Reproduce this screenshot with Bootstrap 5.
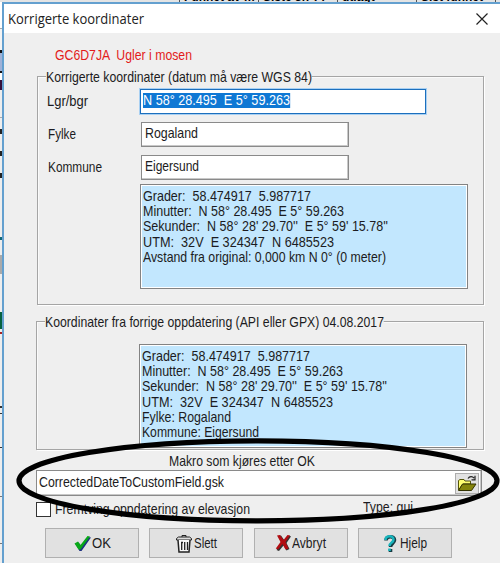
<!DOCTYPE html>
<html lang="no">
<head>
<meta charset="utf-8">
<meta name="viewport" content="width=device-width, initial-scale=1">
<title>Korrigerte koordinater</title>
<link rel="stylesheet" href="https://cdn.jsdelivr.net/npm/bootstrap@5.3.0/dist/css/bootstrap.min.css">
<style>
body{width:500px;height:563px;overflow:hidden;background:#f4f4f4;font-family:"Liberation Sans",Arial,sans-serif;font-size:14.5px;line-height:15.2px;color:#1c1c22}
.screen{width:500px;height:563px}
.grid-head{height:2px;font-size:12px;line-height:12px;background:#e4e4e4;color:#000;padding-left:179px}
.grid-head span{flex:0 0 79px;height:2px;border-left:1px solid #555;padding-left:4px;overflow:hidden;white-space:nowrap}
.grid-head b{display:block;font-weight:700;margin-top:-9px}
.grid-side{width:2px;background:linear-gradient(#fff 0 26px,#aaa 26px 27px,#f4f4f4 27px 48px,#111 48px 51px,#9fb2d8 51px 69px,#111 69px 71px,#fff 71px 78px,#35103a 78px 88px,#eee 88px 115px,#aaa 115px 116px,#eee 116px 127px,#222 127px 132px,#eee 132px 149px,#222 149px 154px,#eee 154px 171px,#222 171px 176px,#eee 176px 235px,#167 235px 238px,#eee 238px 253px,#aaa 253px 272px,#eee 272px 310px,#06623f 310px 327px,#eee 327px 330px,#a22 330px 332px,#eee 332px 404px,#333 404px 406px,#eee 406px 411px,#333 411px 412px,#eee 412px 445px,#333 445px 446px,#eee 446px 494px,#777 494px 495px,#eee 495px 541px,#777 541px 542px,#eee 542px)}
.dlg{width:498px;height:561px;background:#efefef;border-left:2px solid #64a0cf;border-top:2px solid #64a0cf}
.titlebar{height:29px;background:#fff;padding:0 12px 0 4px;font-family:"Open Sans","Noto Sans",sans-serif;font-size:14px;color:#222}
.fit{display:inline-block;white-space:pre;transform-origin:0 50%}
.cache{color:#e31b1b;height:43px;padding:15px 0 0 51px}
.grp{border:1px solid #a5a5a5;box-shadow:1px 1px 0 #fff,inset 1px 1px 0 #fafafa}
.g1{margin-left:33px;width:447px;height:229px}
.g2{margin:16px 0 0 32px;width:448px;height:129px}
.cap{display:block;width:max-content;height:15px;margin:-7px 0 0 8px}
.cap .fit{background:#efefef}
.lab{width:103px;padding-left:10px}
.lab.first{width:102px;padding-left:9px}
.inp{border:1px solid #8a8a8a;background:#fff;box-shadow:inset -1px -1px 0 #c8c8c8}
.inp.big{width:286px;height:25px;border:1px solid #1c6fbd;outline:1px solid #a9d0f2;padding:3px 2px;box-shadow:none}
.inp.sm{width:208px;height:25px;padding:3px 3px}
.sel{background:#0f78d4;color:#fff}
.info{width:328px;border:1px solid #838383;background:#c2e7fe;box-shadow:inset 0 0 0 1px #fff;padding:4px 2px;overflow:hidden}
.info div{height:15.2px}
.i1{height:105px;margin:4px 0 0 102px}
.i2{height:104px;margin:14px 0 0 102px}
.macro-cap{height:20px;padding:4px 0 0 165px}
.macro{width:446px;height:26px;margin-left:32px;padding:0 2px;border:1px solid #8a8a8a;background:#fff;box-shadow:inset -1px -1px 0 #c8c8c8}
.fold{width:24px;height:21px;background:#e2e2e2;border:1px solid #adadad}
.opts{height:32px}
.chk{width:15px;height:15px;border:1px solid #333;background:#fff;margin:6px 0 0 32px}
.opt-lab{width:312px;padding:6px 0 0 4px}
.btns{padding-left:41px;gap:10.3px}
.wbtn{width:94px;height:30px;border:1px solid #b0b0b0;border-radius:0;background:#e1e1e1;padding:0;font-size:14.5px;line-height:15px;color:#1c1c22}
.ring{left:0;top:0;pointer-events:none}
</style>
<script src="https://cdn.jsdelivr.net/npm/bootstrap@5.3.0/dist/js/bootstrap.bundle.min.js"></script>
</head>
<body>
<div class="screen position-relative overflow-hidden">
  <div class="grid-head d-flex"><span><b>Funnet av m</b></span><span><b>Siste 3n ??</b></span><span><b>utlagt</b></span><span><b>Sist funnet</b></span><span></span></div>
  <div class="d-flex">
    <div class="grid-side"></div>
    <main class="dlg">
      <header class="titlebar d-flex align-items-center justify-content-between">
        <span class="fit" data-w="136">Korrigerte koordinater</span>
        <svg width="12" height="12" viewBox="0 0 12 12" stroke="#222" stroke-width="1.2"><path d="M.5.5l11 11M11.5.5l-11 11"/></svg>
      </header>
      <div class="cache"><span class="fit" data-w="137">GC6D7JA  Ugler i mosen</span></div>
      <section class="grp g1">
        <div class="cap"><span class="fit" data-w="266">Korrigerte koordinater (datum må være WGS 84)</span></div>
        <div class="d-flex align-items-center mt-1"><div class="lab first"><span class="fit" data-w="41">Lgr/bgr</span></div><div class="inp big"><span class="fit sel" data-w="147">N 58° 28.495  E 5° 59.263</span></div></div>
        <div class="d-flex align-items-center mt-2"><div class="lab"><span class="fit" data-w="28">Fylke</span></div><div class="inp sm"><span class="fit" data-w="53">Rogaland</span></div></div>
        <div class="d-flex align-items-center mt-2"><div class="lab"><span class="fit" data-w="54">Kommune</span></div><div class="inp sm"><span class="fit" data-w="54">Eigersund</span></div></div>
        <div class="info i1">
          <div><span class="fit" data-w="168">Grader:  58.474917  5.987717</span></div>
          <div><span class="fit" data-w="201">Minutter:  N 58° 28.495  E 5° 59.263</span></div>
          <div><span class="fit" data-w="245">Sekunder:  N 58° 28' 29.70''  E 5° 59' 15.78''</span></div>
          <div><span class="fit" data-w="191">UTM:  32V  E 324347  N 6485523</span></div>
          <div><span class="fit" data-w="243">Avstand fra original: 0,000 km N 0° (0 meter)</span></div>
        </div>
      </section>
      <section class="grp g2">
        <div class="cap"><span class="fit" data-w="339">Koordinater fra forrige oppdatering (API eller GPX) 04.08.2017</span></div>
        <div class="info i2">
          <div><span class="fit" data-w="168">Grader:  58.474917  5.987717</span></div>
          <div><span class="fit" data-w="201">Minutter:  N 58° 28.495  E 5° 59.263</span></div>
          <div><span class="fit" data-w="245">Sekunder:  N 58° 28' 29.70''  E 5° 59' 15.78''</span></div>
          <div><span class="fit" data-w="191">UTM:  32V  E 324347  N 6485523</span></div>
          <div><span class="fit" data-w="89">Fylke: Rogaland</span></div>
          <div><span class="fit" data-w="117">Kommune: Eigersund</span></div>
        </div>
      </section>
      <div class="macro-cap"><span class="fit" data-w="146">Makro som kjøres etter OK</span></div>
      <div class="macro d-flex align-items-center justify-content-between">
        <span class="fit" data-w="185">CorrectedDateToCustomField.gsk</span>
        <div class="fold d-flex align-items-center justify-content-center">
          <svg width="20" height="17" viewBox="0 0 20 17"><path d="M1.5 15V5.5l1.5-1h4l1 1.5h5.5V9H6z" fill="#ffff72" stroke="#55550a"/><path d="M1.5 15.5L5.5 9H19l-4.500 6.500z" fill="#85850c" stroke="#333300"/><path d="M11 3.500c1.500-2.500 4.500-2.500 6-.300M18 .8v4h-3.500" fill="none" stroke="#222" stroke-width="1.200"/></svg>
        </div>
      </div>
      <div class="opts d-flex">
        <div class="chk"></div>
        <div class="opt-lab"><span class="fit" data-w="195">Fremtving oppdatering av elevasjon</span></div>
        <div class="pt-1"><span class="fit" data-w="50">Type: gui</span></div>
      </div>
      <div class="btns d-flex">
        <button class="btn wbtn d-flex align-items-center justify-content-center"><svg width="18" height="17" viewBox="0 0 18 17"><path d="M1.500 9l3-1.500 2.500 3L14 2l3 .5L7.500 16H5.500z" fill="#1c2f80"/><path d="M.5 8.500l3.500-2 2.500 3.500L13.500 1l2.500.5L6.500 14.500h-2z" fill="#08a818"/></svg><span class="fit" data-w="19">OK</span></button>
        <button class="btn wbtn d-flex align-items-center justify-content-center"><svg width="19" height="19" viewBox="0 0 19 19" fill="none" stroke="#222"><path d="M7 3V1.500h4V3M1.500 6V4.500l2-1.500h11l2 1.500V6z" fill="#ddd"/><path d="M3 6l1 12h10l1-12" fill="#f8f8f8" stroke-width="1.500"/><path d="M6 8.500h2M6.700 8v8M9.700 8v8M12.500 8v8" stroke-width="1.300"/></svg><span class="fit" data-w="23">Slett</span></button>
        <button class="btn wbtn d-flex align-items-center justify-content-center"><svg width="17" height="18" viewBox="0 0 17 18"><path d="M3 2l3-.5 3.500 5L14 1.500l2 1L11.500 9l3 6-3 1.500-3-5L4 17l-2.500-1L6.500 8.500z" fill="#333"/><path d="M2 1.500L5 1l3.500 5L12.500 1l2.500.5L10.500 8l3 6.500-3 1-3-5.500L3 15.500.8 14.500 5.500 8z" fill="#b10d12"/></svg><span class="fit" data-w="34">Avbryt</span></button>
        <button class="btn wbtn d-flex align-items-center justify-content-center"><svg width="18" height="19" viewBox="0 0 18 19" fill="none"><path d="M4 6.500c0-5 8.500-5 8.500-.5 0 3.500-4 3-4 7M8.500 15v3" stroke="#173c44" stroke-width="3.600"/><path d="M3.500 6c0-5 8-5 8-.5 0 3.500-4 3-4 6.500M7.500 14.500v2.500" stroke="#18b4bc" stroke-width="2.600"/></svg><span class="fit" data-w="27">Hjelp</span></button>
      </div>
    </main>
  </div>
  <svg class="ring position-absolute" width="500" height="563"><ellipse cx="258" cy="480.800" rx="239" ry="40" fill="none" stroke="#000" stroke-width="5.200"/></svg>
</div>
<script>
document.querySelectorAll('.fit').forEach(function (el) {
  var n = el.getBoundingClientRect().width, w = +el.dataset.w;
  el.style.transform = 'scaleX(' + (w / n) + ')';
  el.style.marginRight = (w - n) + 'px';
});
</script>
</body>
</html>
